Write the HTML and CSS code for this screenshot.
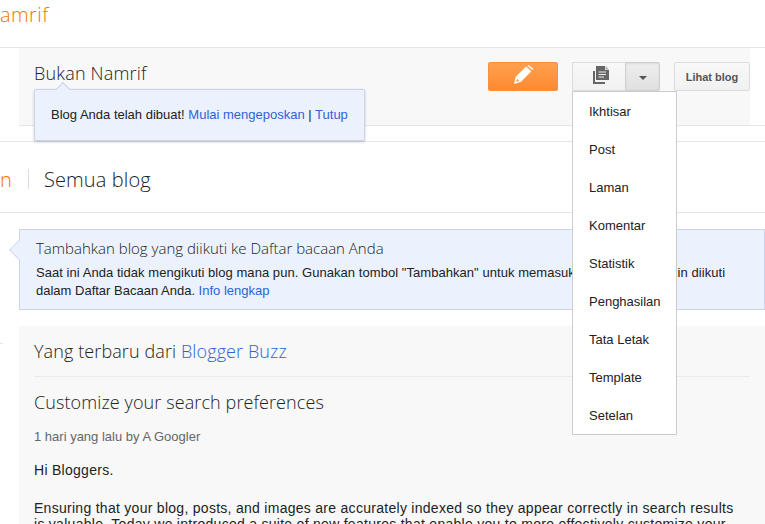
FILE: index.html
```html
<!DOCTYPE html>
<html lang="id">
<head>
<meta charset="utf-8">
<title>Blogger</title>
<link rel="stylesheet" href="styles.css">
</head>
<body>
<header class="top"><span class="brand">amrif</span></header>
<section class="blogrow">
  <div class="panel">
    <h2 class="blogname">Bukan Namrif</h2>
    <div class="actions">
      <button class="btn btn-new" aria-label="Post baru">
        <svg width="19" height="19" viewBox="0 0 19 19"><path fill="#fff" d="M0 19 L1.6 11.8 L12.2 1.6 L17.2 6.4 L6.8 17 Z M13.4 .6 L14.4 0 L19 3.6 L18.4 5.2 Z"/><path fill="#ff9a44" d="M2.2 16.8 L3 13.8 L5.4 16 Z"/></svg>
      </button>
      <div class="split">
        <button class="btn btn-pages" aria-label="Laman">
          <svg width="16" height="18" viewBox="0 0 16 18"><path fill="#666" d="M0 5H2V16H12V18H0Z"/><path fill="#666" d="M3 0H12V4H16V14H3Z"/><path fill="#aaa" d="M12.6 0L16 3.4H12.6Z"/><path fill="#eee" d="M5.5 5.5H13V6.6H5.5ZM5.5 8H13V9.1H5.5ZM5.5 10.5H11V11.6H5.5Z"/></svg>
        </button>
        <button class="btn btn-caret" aria-label="Lainnya"><span class="caret"></span></button>
      </div>
      <button class="btn btn-view">Lihat blog</button>
    </div>
    <div class="popup">
      <span class="popup-arrow"></span>
      Blog Anda telah dibuat! <a href="#">Mulai mengeposkan</a> | <a href="#">Tutup</a>
    </div>
    <nav class="menu">
      <a href="#">Ikhtisar</a>
      <a href="#">Post</a>
      <a href="#">Laman</a>
      <a href="#">Komentar</a>
      <a href="#">Statistik</a>
      <a href="#">Penghasilan</a>
      <a href="#">Tata Letak</a>
      <a href="#">Template</a>
      <a href="#">Setelan</a>
    </nav>
  </div>
</section>
<section class="tabs">
  <span class="tab-active">n</span>
  <span class="tab-sep"></span>
  <span class="tab">Semua blog</span>
</section>
<main class="content">
  <div class="notice">
    <span class="notice-arrow"></span>
    <h3 class="notice-title">Tambahkan blog yang diikuti ke Daftar bacaan Anda</h3>
    <p class="notice-text"><span class="notice-line">Saat ini Anda tidak mengikuti blog mana pun. Gunakan tombol "Tambahkan" untuk memasukkan blog yang ingin diikuti</span><br>dalam Daftar Bacaan Anda. <a href="#">Info lengkap</a></p>
  </div>
  <article class="card">
    <h2 class="card-head">Yang terbaru dari <a href="#">Blogger Buzz</a></h2>
    <h3 class="post-title">Customize your search preferences</h3>
    <div class="post-meta">1 hari yang lalu by A Googler</div>
    <p class="post-body">Hi Bloggers.</p>
    <p class="post-body">Ensuring that your blog, posts, and images are accurately indexed so they appear correctly in search results<br>is valuable. Today we introduced a suite of new features that enable you to more effectively customize your</p>
  </article>
</main>
</body>
</html>
```
FILE: styles.css
```css
* { box-sizing: border-box; }
html, body { margin: 0; height: 524px; overflow: hidden; background: #fff; }
body { font-family: "Liberation Sans", Arial, sans-serif; color: #222; }
a { color: #2f62d8; text-decoration: none; }
h2, h3, p { margin: 0; font-weight: 300; }

.top { height: 48px; border-bottom: 1px solid #e5e5e5; padding-top: 1px; }
.brand { font: 300 20px/27px "Open Sans", sans-serif; letter-spacing: .4px; color: #f57400; }

.blogrow { height: 94px; border-bottom: 1px solid #e5e5e5; padding-left: 19px; background: linear-gradient(#e5e5e5, #e5e5e5) no-repeat 19px 77px / 100% 1px; }
.panel { position: relative; height: 77px; margin-right: 15px; padding: 0 0 0 15px; background: #f8f8f8; display: flex; justify-content: space-between; }
.blogname { font: 300 18px/24px "Open Sans", sans-serif; letter-spacing: .18px; padding-top: 13px; color: #222; }

.actions { display: flex; align-items: flex-start; padding-top: 14px; }
.btn { display: flex; align-items: center; justify-content: center; height: 29px; padding: 0; border: 1px solid #dcdcdc; border-radius: 2px; background: linear-gradient(#f8f8f8, #f1f1f1); font-family: inherit; }
.btn-new { width: 70px; margin-right: 14px; padding-bottom: 4px; border-color: #f7903f; background: linear-gradient(#ffa04f, #ff8a30); }
.split { display: flex; margin-right: 14px; }
.btn-pages { width: 53px; padding: 0 0 3px 3px; border-radius: 2px 0 0 2px; border-right: 0; }
.btn-caret { width: 35px; border-radius: 0 2px 2px 0; border-color: #cfcfcf; background: linear-gradient(#eee, #e0e0e0); box-shadow: inset 0 1px 2px rgba(0,0,0,.08); padding-top: 3px; }
.caret { width: 0; height: 0; border: 4px solid transparent; border-top: 4px solid #555; border-bottom: 0; }
.btn-view { width: 76px; font-size: 11px; font-weight: 700; color: #555; }

.popup { position: absolute; left: 15px; top: 41px; width: 331px; height: 52px; padding-left: 16px; background: #ebf1fd; border: 1px solid #ccd3ea; border-radius: 2px; box-shadow: 0 1px 3px rgba(0,0,0,.2); font-size: 13px; line-height: 50px; color: #222; white-space: nowrap; }
.popup-arrow { position: absolute; left: 23px; top: -6px; width: 10px; height: 10px; background: #ebf1fd; border: 1px solid #ccd3ea; border-width: 1px 0 0 1px; transform: rotate(45deg); }

.menu { position: absolute; left: 553px; top: 43px; width: 105px; height: 344px; padding-top: 1px; background: #fff; border: 1px solid #ccc; display: flex; flex-direction: column; z-index: 3; }
.menu a { display: block; height: 38px; flex: none; padding-left: 16px; font-size: 13px; line-height: 38px; color: #222; }

.tabs { display: flex; align-items: center; height: 71px; border-bottom: 1px solid #e5e5e5; padding-top: 4px; font: 300 20px/27px "Open Sans", sans-serif; }
.tab-active { color: #f57400; width: 28px; }
.tab-sep { width: 1px; height: 20px; background: #ddd; margin-right: 15px; }
.tab { color: #222; letter-spacing: .1px; }

.content { padding: 16px 0 0 19px; }
.notice { position: relative; height: 81px; padding: 7px 16px 0; background: #ebf1fd; border: 1px solid #ccd3ea; }
.notice-arrow { position: absolute; left: -10px; top: 11px; width: 18px; height: 18px; background: #ebf1fd; border: 1px solid #ccd3ea; border-width: 0 0 1px 1px; transform: rotate(45deg) scale(.78); }
.notice-title { position: relative; font: 300 15px/22px "Open Sans", sans-serif; color: #222; }
.notice-text { position: relative; font-size: 13px; line-height: 18px; color: #222; margin-top: 5px; white-space: nowrap; }
.notice-line { letter-spacing: .05px; }

.card { position: relative; margin-top: 16px; height: 198px; padding: 13px 0 0 15px; background: #f8f8f8; }
.card::before { content: ""; position: absolute; left: -19px; top: 17px; width: 3px; height: 1px; background: #e5e5e5; }
.card-head { font: 300 18px/24px "Open Sans", sans-serif; letter-spacing: .1px; color: #222; padding-bottom: 13px; margin-right: 15px; border-bottom: 1px solid #ebebeb; }
.post-title { font: 300 18px/24px "Open Sans", sans-serif; letter-spacing: .1px; color: #222; margin-top: 13px; }
.post-meta { font-size: 13px; line-height: 16px; color: #666; margin-top: 15px; }
.post-body { font-size: 14px; line-height: 16px; font-weight: 400; letter-spacing: .28px; color: #222; margin-top: 17px; white-space: nowrap; }
.post-body + .post-body { margin-top: 22px; }
```
